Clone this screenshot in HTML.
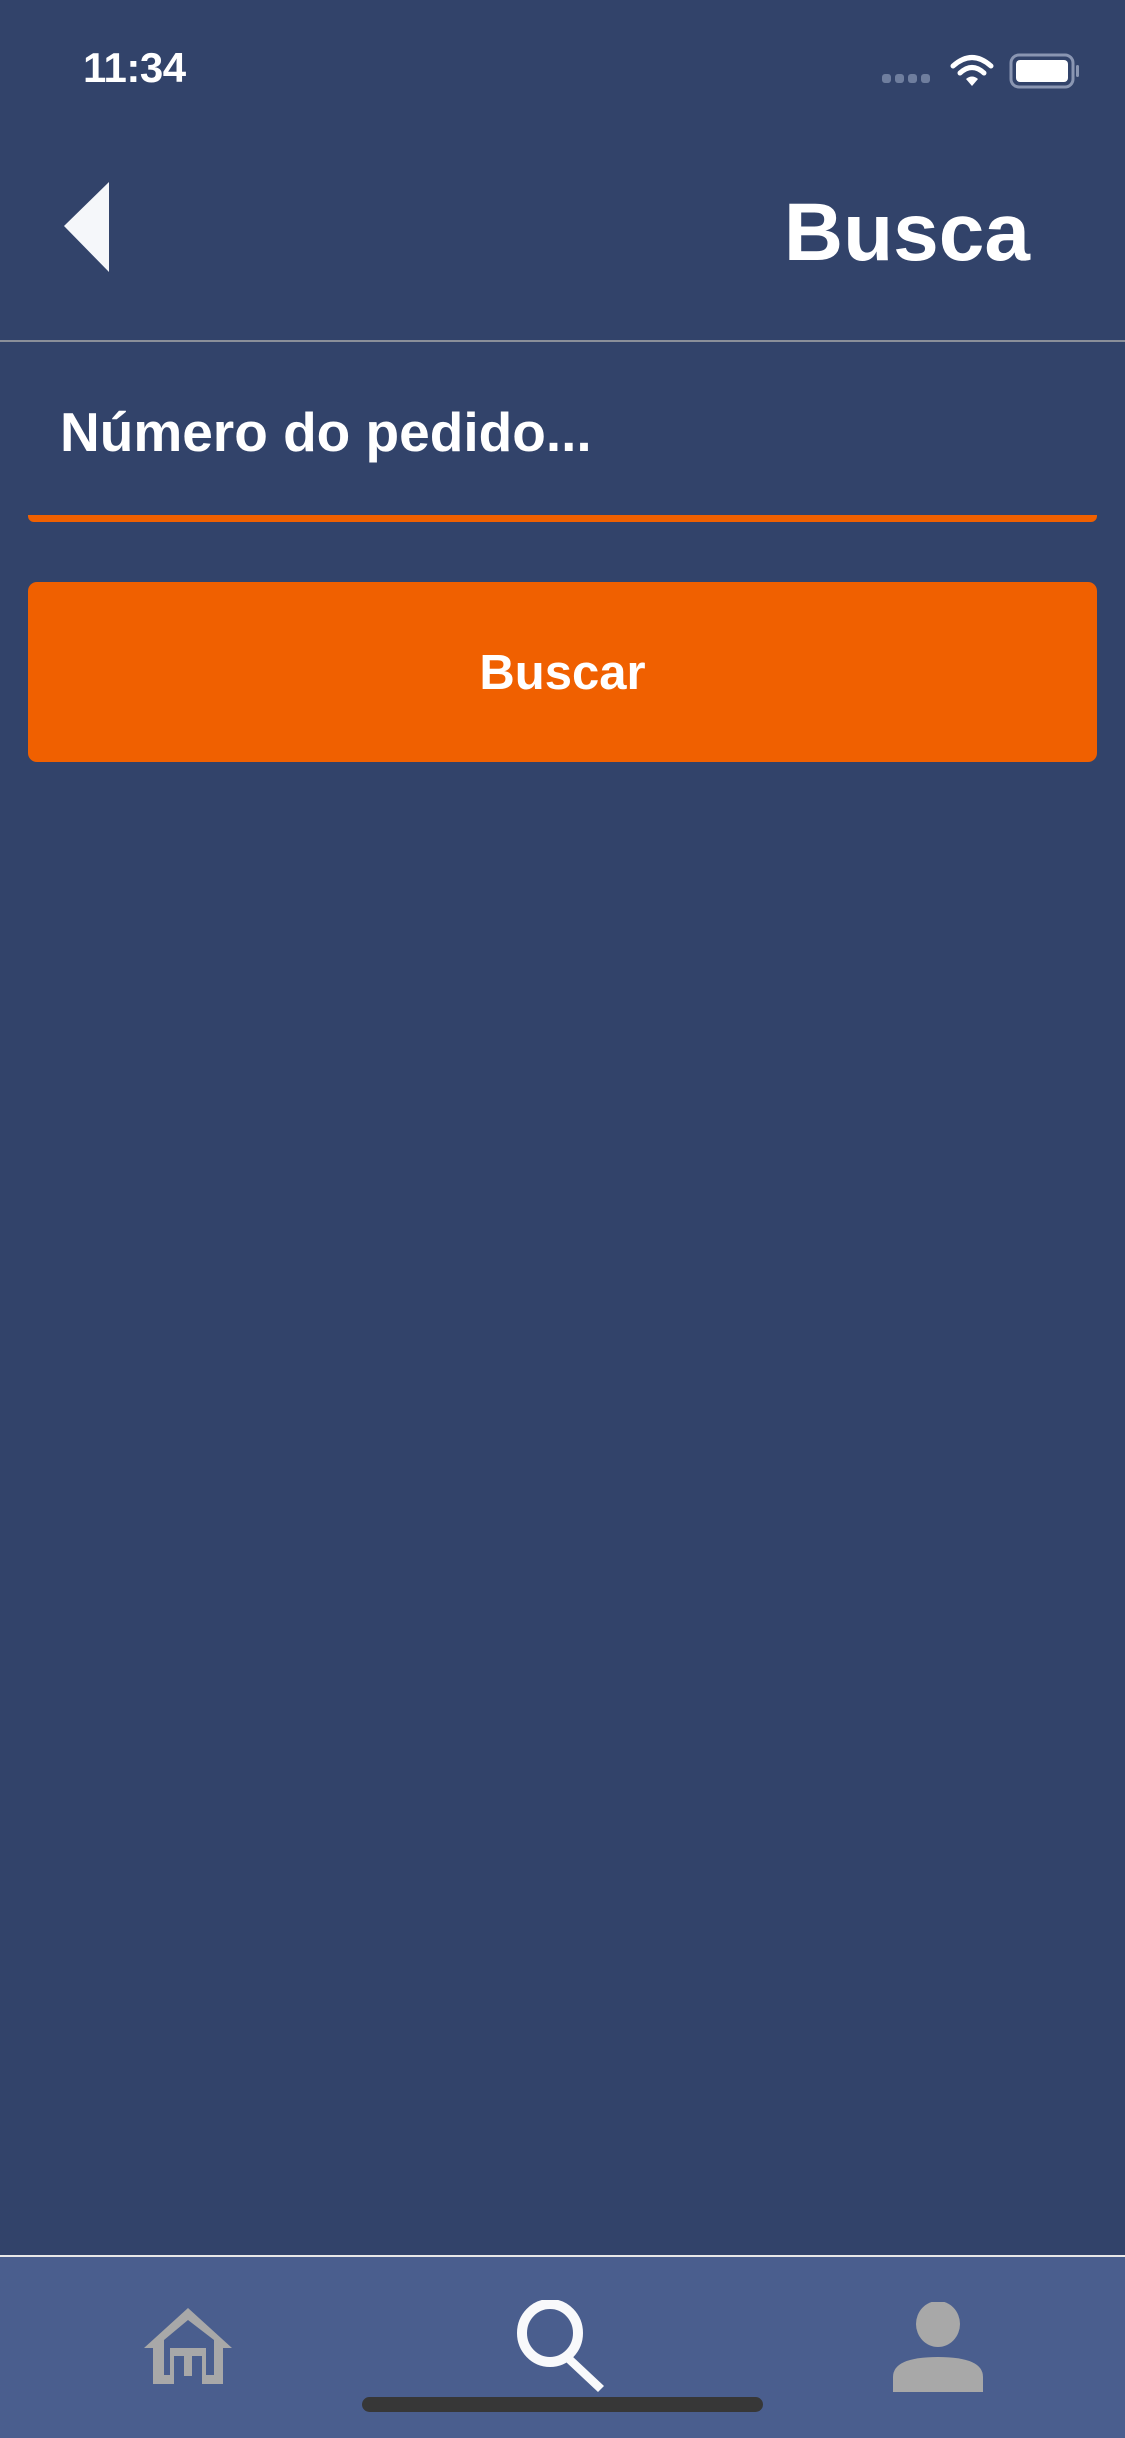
<!DOCTYPE html>
<html><head><meta charset="utf-8"><style>
html,body{margin:0;padding:0;}
body{width:1125px;height:2436px;background:#32436a;position:relative;overflow:hidden;font-family:"Liberation Sans",sans-serif;color:#fff;}
.abs{position:absolute;}
</style></head><body>
<div class="abs" style="left:83px;top:44px;font-size:42px;font-weight:bold;letter-spacing:-0.5px;">11:34</div>
<svg class="abs" style="left:880px;top:50px" width="200" height="50" viewBox="0 0 200 50">
  <g fill="#6f7e9e"><rect x="2" y="24" width="9" height="9" rx="3"/><rect x="15" y="24" width="9" height="9" rx="3"/><rect x="28" y="24" width="9" height="9" rx="3"/><rect x="41" y="24" width="9" height="9" rx="3"/></g>
  <g fill="none" stroke="#fff" stroke-width="5" stroke-linecap="round"><path d="M73 16 Q92 -1 111 16"/><path d="M80 23 Q92 12 104 23"/></g>
  <path d="M86 29 L92 36 L98 29 Q92 24 86 29Z" fill="#fff"/>
  <rect x="131" y="5" width="62" height="32" rx="8" fill="none" stroke="#8a96b2" stroke-width="3"/>
  <rect x="136" y="10" width="52" height="22" rx="4" fill="#fff"/>
  <rect x="196" y="15" width="3" height="12" rx="1.5" fill="#8a96b2"/>
</svg>
<svg class="abs" style="left:64px;top:182px" width="46" height="90"><polygon points="45,0 45,90 0,44" fill="#f5f7fa"/></svg>
<div class="abs" style="right:95px;top:186px;font-size:82px;font-weight:bold;">Busca</div>
<div class="abs" style="left:0;top:340px;width:1125px;height:2px;background:#8a8f99;"></div>
<div class="abs" style="left:60px;top:400px;font-size:55px;font-weight:bold;">Número do pedido...</div>
<div class="abs" style="left:28px;top:515px;width:1069px;height:7px;background:#f06000;border-radius:0 0 6px 6px;"></div>
<div class="abs" style="left:28px;top:582px;width:1069px;height:180px;background:#f06000;border-radius:9px;"></div>
<div class="abs" style="left:28px;top:645px;width:1069px;text-align:center;font-size:49px;font-weight:bold;">Buscar</div>
<div class="abs" style="left:0;top:2255px;width:1125px;height:181px;background:#4a5e8e;border-top:2px solid #e8e8e8;"></div>
<svg class="abs" style="left:143px;top:2308px" width="90" height="78" viewBox="0 0 90 78">
  <path d="M45 0 L89 40 L80 40 L80 76 L59 76 L59 48 L49 48 L49 68 L41 68 L41 48 L31 48 L31 76 L10 76 L10 40 L1 40 Z M45 12 L21 32 L21 67 L27 67 L27 40 L63 40 L63 67 L71 67 L71 32 Z" fill="#a8a8a8" fill-rule="evenodd"/>
</svg>
<svg class="abs" style="left:516px;top:2300px" width="96" height="94" viewBox="0 0 96 94">
  <ellipse cx="34" cy="33" rx="28" ry="29" fill="none" stroke="#f8f9fb" stroke-width="10"/>
  <path d="M56 56 L88 86 L82 92 L50 62 Z" fill="#f8f9fb"/>
</svg>
<svg class="abs" style="left:893px;top:2302px" width="90" height="90" viewBox="0 0 90 90">
  <ellipse cx="45" cy="22" rx="22" ry="23" fill="#a8a8a8"/>
  <path d="M0 90 L0 75 Q0 55 45 55 Q90 55 90 75 L90 90 Z" fill="#a8a8a8"/>
</svg>
<div class="abs" style="left:362px;top:2397px;width:401px;height:15px;background:#373737;border-radius:8px;"></div>
</body></html>
